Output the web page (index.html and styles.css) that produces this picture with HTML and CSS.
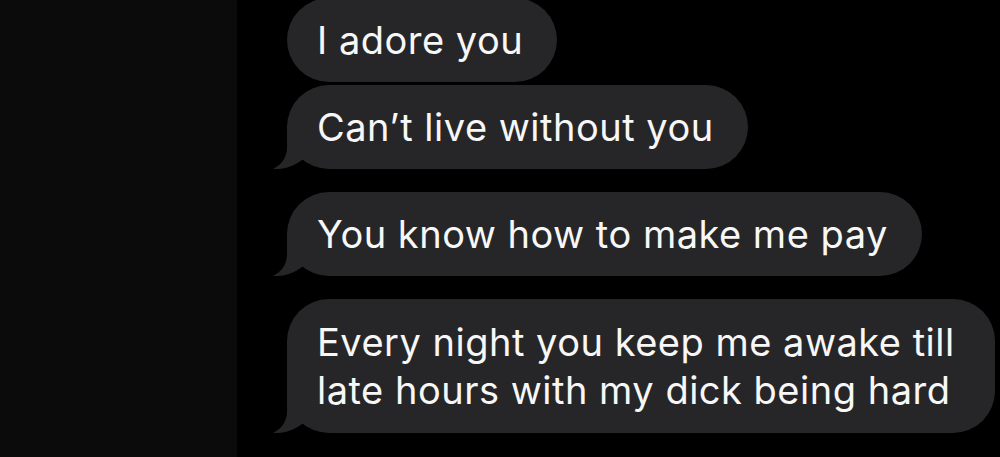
FILE: index.html
```html
<!DOCTYPE html>
<html lang="en">

<head>
  <meta charset="UTF-8">
  <meta name="viewport" content="width=device-width, initial-scale=1.0">
  <title>Messages</title>
  <link rel="stylesheet" href="styles.css">
</head>

<body>

  <main class="chat">
    <aside class="chat__sidebar"></aside>

    <section class="chat__thread">
      <div class="msg-group">
        <p class="bubble">I adore you</p>
        <p class="bubble bubble--tail">Can’t live without you</p>
      </div>
      <div class="msg-group">
        <p class="bubble bubble--tail">You know how to make me pay</p>
      </div>
      <div class="msg-group">
        <p class="bubble bubble--tail bubble--wide">Every night you keep me awake till late hours with my dick being hard</p>
      </div>
    </section>
  </main>

  <!-- the little tail, reused for every bubble that ends a group -->
  <svg width="0" height="0" style="position:absolute">
    <defs>
      <path id="tail" d="M14 0 L14 22 C14 33 8 40 0 44 C10 44.5 20 42 29 35 L42 30 L42 0 Z" />
    </defs>
  </svg>

  <script>
    document.querySelectorAll('.bubble--tail').forEach(function (bubble) {
      bubble.insertAdjacentHTML('beforeend',
        '<svg class="bubble__tail" viewBox="0 0 42 44"><use href="#tail"></use></svg>');
    });
  </script>
</body>

</html>
```

FILE: styles.css
```css
:root {
  --clr-bg: #000;
  --clr-sidebar: #0b0b0c;
  --clr-bubble: #262628;
  --clr-text: #f7f7f7;

  --fnt-main: Inter, "Liberation Sans", sans-serif;
}

* {
  box-sizing: border-box;
  margin: 0;
  padding: 0;
}

html,
body {
  height: 100%;
}

body {
  font-family: var(--fnt-main);
  background-color: var(--clr-bg);
  overflow: hidden;
}

.chat {
  display: flex;
  height: 100%;
}

.chat__sidebar {
  flex: 0 0 237px;
  background-color: var(--clr-sidebar);
}

.chat__thread {
  flex: 1;
  display: flex;
  flex-direction: column;
  align-items: flex-start;
  gap: 23px;
  padding-left: 50px;
  margin-top: -2px;
}

.msg-group {
  display: flex;
  flex-direction: column;
  align-items: flex-start;
  gap: 3px;
}

.bubble {
  position: relative;
  padding: 18px 34px 18px 30px;
  font-size: 38px;
  line-height: 48px;
  letter-spacing: 0.5px;
  color: var(--clr-text);
  background-color: var(--clr-bubble);
  border-radius: 42px;
}

.bubble--wide {
  max-width: 708px;
  padding-top: 19px;
  padding-bottom: 19px;
}

.bubble__tail {
  position: absolute;
  left: -14px;
  bottom: 0;
  width: 42px;
  height: 44px;
  fill: var(--clr-bubble);
}
```
